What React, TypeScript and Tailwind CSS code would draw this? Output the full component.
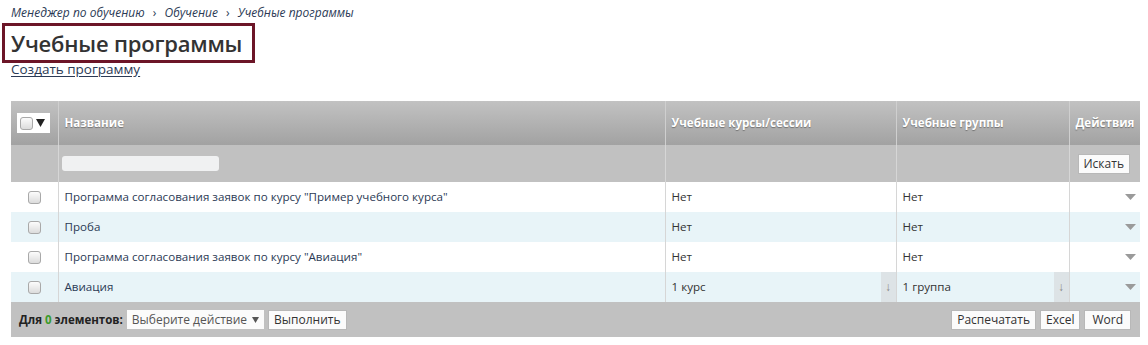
import React from "react";

const rows = [
  { name: 'Программа согласования заявок по курсу "Пример учебного курса"', c: "Нет", g: "Нет", arrow: false },
  { name: "Проба", c: "Нет", g: "Нет", arrow: false },
  { name: 'Программа согласования заявок по курсу "Авиация"', c: "Нет", g: "Нет", arrow: false },
  { name: "Авиация", c: "1 курс", g: "1 группа", arrow: true },
];

function Check() {
  return <span className="inline-block w-[13px] h-[13px] rounded-[3px] border border-[#a9a9a9] bg-gradient-to-b from-[#fcfcfc] to-[#dcdcdc]" />;
}

function Caret() {
  return (
    <svg width="11" height="6" viewBox="0 0 11 6"><path d="M0 0H11L5.5 6Z" fill="#9a9a9a" /></svg>
  );
}

function Btn({ children, className = "" }: { children: React.ReactNode; className?: string }) {
  return (
    <span className={"inline-flex items-center h-[20px] px-[5px] bg-[#fbfbfb] border border-[#b8b8b8] text-[12px] text-[#333] " + className}>
      {children}
    </span>
  );
}

export default function App() {
  return (
    <div className="w-[1148px] h-[345px] bg-white text-[#333]" style={{ fontFamily: '"Open Sans", "Noto Sans", sans-serif' }}>
      <div className="pt-[5px] pl-[11px] text-[12px] italic text-[#2b3a55] leading-[16px]">
        Менеджер по обучению <span className="mx-[5px] not-italic">›</span> Обучение <span className="mx-[5px] not-italic">›</span> Учебные программы
      </div>
      <div className="ml-[2px] mt-[2px] w-[253px] h-[40px] border-[3px] border-[#6c1527] pl-[6px] flex items-center">
        <span className="text-[22px] font-semibold text-[#333] leading-none tracking-[-0.2px]">Учебные программы</span>
      </div>
      <div className="pl-[11px] -mt-[3px] text-[13.5px] leading-[18px] text-[#2b3a55] underline underline-offset-2">Создать программу</div>

      <table className="ml-[11px] mt-[23px] w-[1129px] border-collapse table-fixed text-[11.6px]">
        <colgroup>
          <col className="w-[47px]" />
          <col className="w-[607px]" />
          <col className="w-[231px]" />
          <col className="w-[173px]" />
          <col className="w-[71px]" />
        </colgroup>
        <thead>
          <tr className="h-[44px] bg-gradient-to-b from-[#c2c2c2] to-[#a2a2a2] text-white font-bold text-left [text-shadow:0_1px_1px_rgba(0,0,0,0.35)]">
            <th className="border-r border-[#cfcfcf] p-0">
              <div className="ml-[6px] w-[33px] h-[20px] bg-white flex items-center pl-[3px] gap-[3px]">
                <Check />
                <svg width="9" height="8" viewBox="0 0 9 8"><path d="M0 0H9L4.5 8Z" fill="#222" /></svg>
              </div>
            </th>
            <th className="border-r border-[#cfcfcf] pl-[6px] font-bold">Название</th>
            <th className="border-r border-[#cfcfcf] pl-[6px] font-bold">Учебные курсы/сессии</th>
            <th className="border-r border-[#cfcfcf] pl-[6px] font-bold">Учебные группы</th>
            <th className="pl-[6px] font-bold">Действия</th>
          </tr>
          <tr className="h-[37px] bg-[#c1c1c1]">
            <td className="border-r border-[#d6d6d6]" />
            <td className="border-r border-[#d6d6d6] pl-[3px]">
              <div className="w-[157px] h-[15px] bg-[#f0f1f2] rounded-[3px]" />
            </td>
            <td className="border-r border-[#d6d6d6]" />
            <td className="border-r border-[#d6d6d6]" />
            <td className="pl-[8px]">
              <Btn className="h-[19px] px-[5px]">Искать</Btn>
            </td>
          </tr>
        </thead>
        <tbody>
          {rows.map((r, i) => (
            <tr key={i} className={"h-[30px] " + (i % 2 ? "bg-[#e8f4f8]" : "bg-white")}>
              <td className="border-r border-[#d6d6d6] text-center align-middle">
                <div className="flex justify-center pt-[1px]"><Check /></div>
              </td>
              <td className="border-r border-[#d6d6d6] pl-[6px] text-[#2b3a55]">{r.name}</td>
              <td className="border-r border-[#d6d6d6] p-0">
                <div className="flex h-[30px] items-center">
                  <span className="flex-1 pl-[6px]">{r.c}</span>
                  {r.arrow && <span className="w-[15px] h-[30px] bg-[#dde3e6] text-[#888] text-[12px] flex items-center justify-center">↓</span>}
                </div>
              </td>
              <td className="border-r border-[#d6d6d6] p-0">
                <div className="flex h-[30px] items-center">
                  <span className="flex-1 pl-[6px]">{r.g}</span>
                  {r.arrow && <span className="w-[15px] h-[30px] bg-[#dde3e6] text-[#888] text-[12px] flex items-center justify-center">↓</span>}
                </div>
              </td>
              <td className="p-0">
                <div className="flex justify-end pr-[4px]"><Caret /></div>
              </td>
            </tr>
          ))}
          <tr className="h-[35px] bg-[#c1c1c1]">
            <td colSpan={5} className="pl-[8px] pr-[9px]">
              <div className="flex items-center">
                <span className="font-bold text-[11.5px] text-[#222] mr-[4px]">Для <span className="text-[#3a9b2a]">0</span> элементов:</span>
                <span className="inline-flex items-center h-[19px] px-[5px] bg-[#fbfbfb] text-[12px] text-[#555] gap-[5px]">
                  Выберите действие
                  <svg width="7" height="6" viewBox="0 0 7 6"><path d="M0 0H7L3.5 6Z" fill="#555" /></svg>
                </span>
                <Btn className="ml-[4px] px-[5px]">Выполнить</Btn>
                <div className="flex-1" />
                <Btn>Распечатать</Btn>
                <Btn className="ml-[4px]">Excel</Btn>
                <Btn className="ml-[4px] px-[7px]">Word</Btn>
              </div>
            </td>
          </tr>
        </tbody>
      </table>
    </div>
  );
}
